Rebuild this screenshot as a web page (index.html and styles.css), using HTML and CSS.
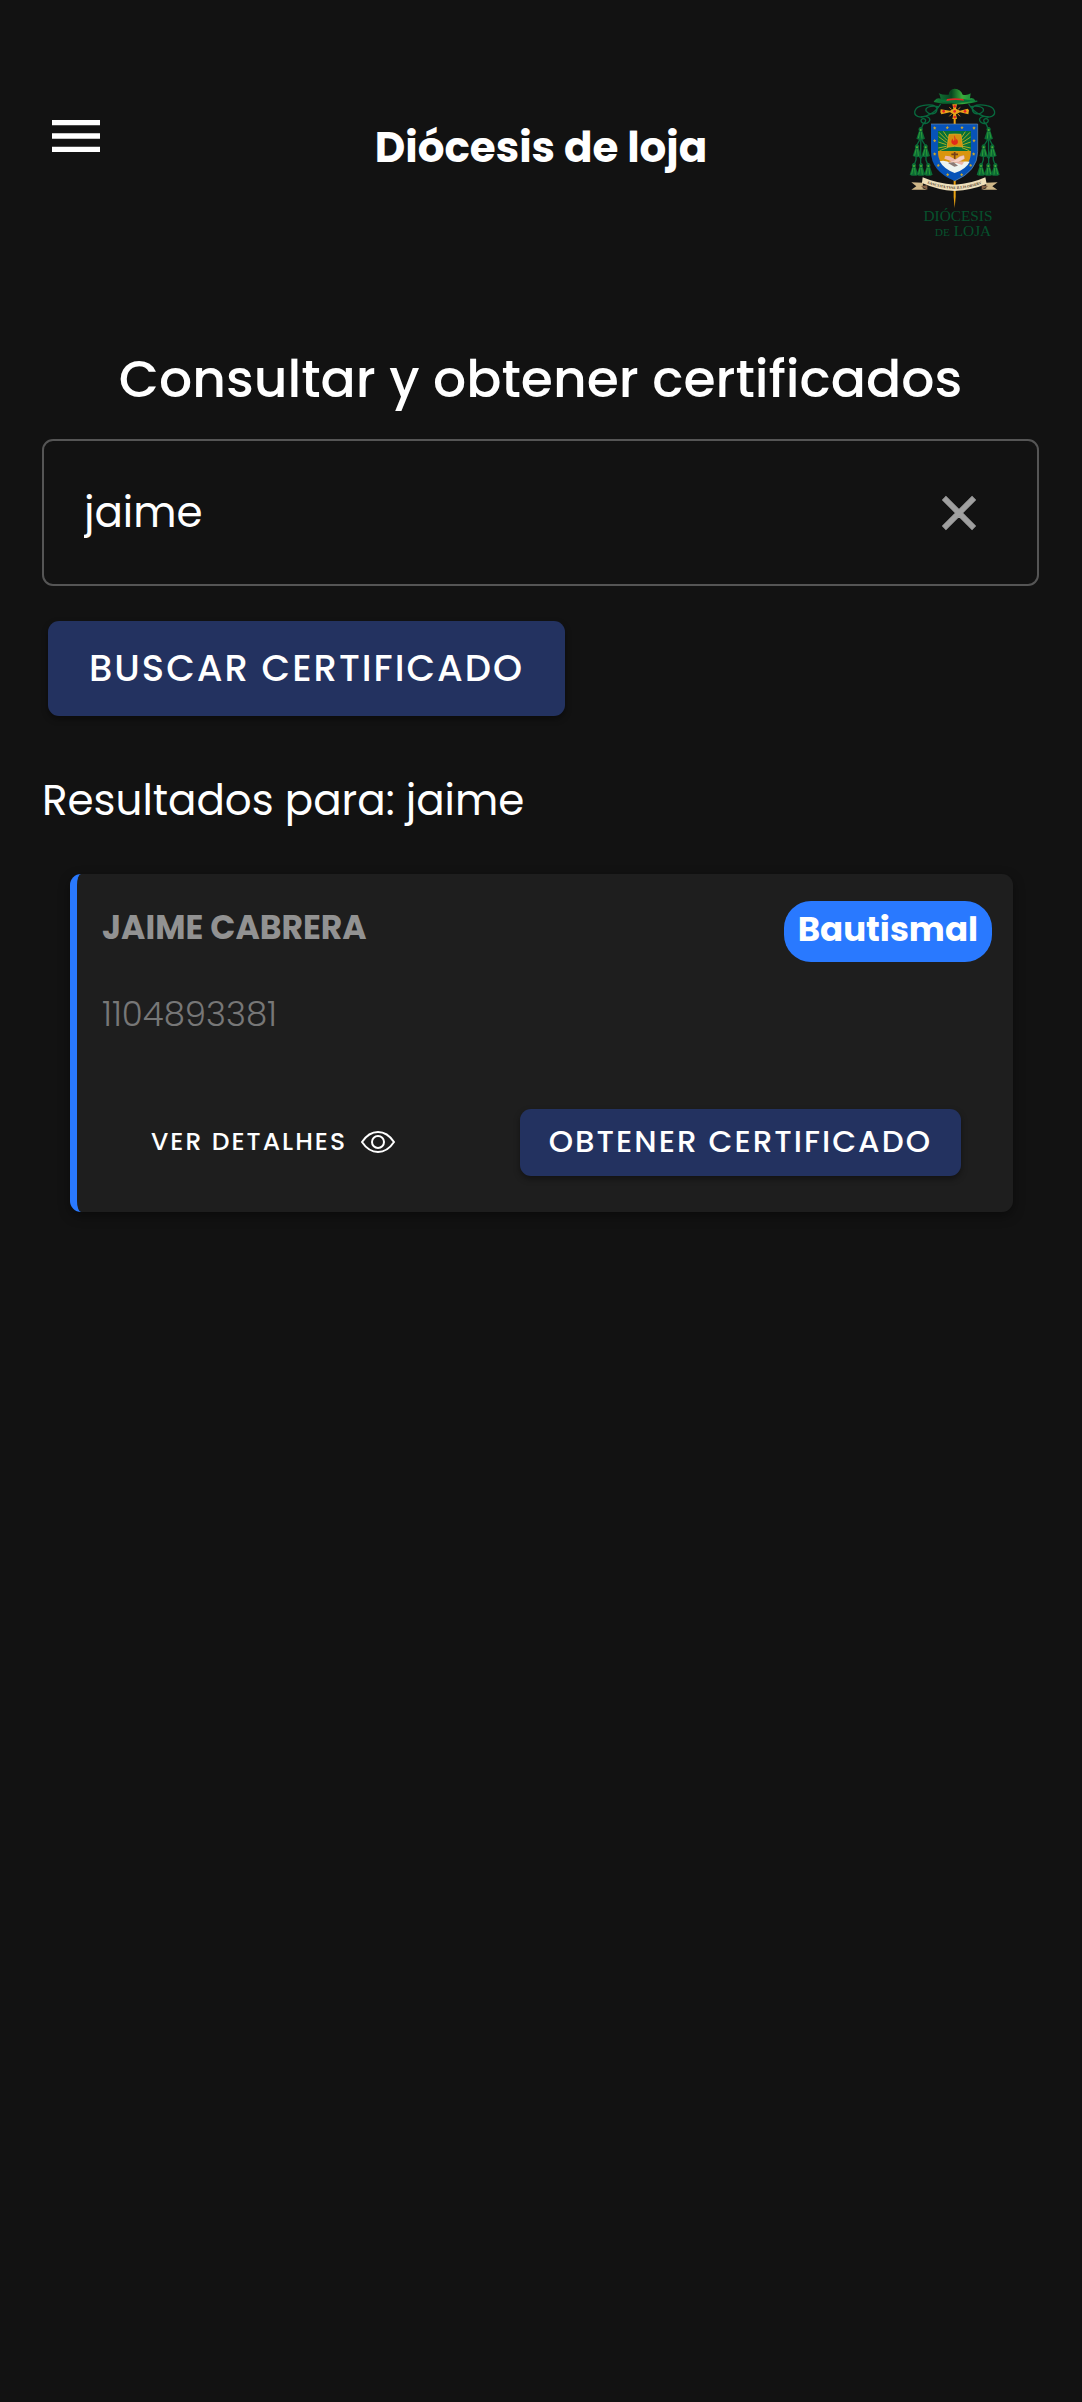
FILE: index.html
```html
<!DOCTYPE html>
<html lang="es">
<head>
<meta charset="utf-8">
<meta name="viewport" content="width=device-width, initial-scale=1">
<title>Diócesis de loja</title>
<link rel="stylesheet" href="styles.css">
</head>
<body>
<header class="topbar">
  <button class="icon-button menu" type="button" aria-label="Menú">
    <svg viewBox="0 0 24 24" width="64" height="64" fill="currentColor"><path d="M3,6H21V8H3V6M3,11H21V13H3V11M3,16H21V18H3V16Z"/></svg>
  </button>
  <div class="brand">Diócesis de loja</div>
  <svg class="crest" viewBox="0 0 330 495" role="img" aria-label="Escudo de la Diócesis de Loja">
    <defs>
      <linearGradient id="hat" x1="0" x2="1"><stop offset="0" stop-color="#17823b"/><stop offset=".4" stop-color="#06451f"/><stop offset=".65" stop-color="#39ad3b"/><stop offset="1" stop-color="#08743a"/></linearGradient>
      <g id="tassel"><path d="M0-18C-6-18-8-10-5-7L-13 17Q0 24 13 17L5-7C8-10 6-18 0-18Z" fill="#0b6a35"/><path d="M-3-3L-7 16M2-3L4 17" stroke="#31a538" stroke-width="2.5"/><circle cy="-9" r="3" fill="#55ad35"/></g>
      <g id="cords" fill="none" stroke="#08693e" stroke-width="4">
        <path d="M122 72C105 100 72 117 53 109C36 101 45 81 67 77C91 71 111 76 111 88C109 104 89 106 79 94C72 83 91 75 116 80"/>
        <path d="M62 111C83 105 96 116 86 126C76 136 59 127 64 119C71 111 84 120 72 130C62 139 62 150 62 258"/>
        <path d="M62 174L48 200V240L42 256M62 174L78 200V240L84 256M48 214L62 235L78 214"/>
      </g>
      <g id="tassels"><use href="#tassel" x="62" y="159"/><use href="#tassel" x="51" y="211"/><use href="#tassel" x="77" y="211"/><use href="#tassel" x="42" y="267"/><use href="#tassel" x="63" y="267"/><use href="#tassel" x="85" y="267"/></g>
      <path id="star" d="M0-5L2-2L5-1L2 2L2 5L0 3L-3 5L-2 2L-5-1L-2-2Z" fill="#c9a52e"/>
    </defs>
    <path d="M161 112H167V350L164 384L161 350Z" fill="#eba311"/>
    <use href="#cords"/><use href="#cords" transform="matrix(-1 0 0 1 328 0)"/>
    <use href="#tassels"/><use href="#tassels" transform="matrix(-1 0 0 1 328 0)"/>
    <path d="M103 62Q112 52 122 56L119 45L116 40Q131 46 146 44Q148 27 164 26Q182 27 188 44Q202 47 212 40L210 55Q222 52 226 62Q235 61 232 65Q190 75 164 73Q130 74 101 66Z" fill="url(#hat)"/>
    <path d="M111 62Q164 51 222 62Q192 69 164 69Q136 69 111 62Z" fill="#087238"/>
    <path d="M141 57Q165 52 190 57L192 62Q164 58 139 63Z" fill="#d72a27"/>
    <path d="M157 73H171L168 86L180 92L203 86L207 91L205 103L180 97L168 103L171 117H157L160 103L150 97L124 103L121 97L122 88L150 92L160 86Z" fill="#e9a41b"/>
    <path d="M148 82L155 88M181 82L174 88M148 109L156 101M180 109L173 101" stroke="#c88321" stroke-width="3"/>
    <g fill="#e62226"><circle cx="164" cy="79" r="4"/><circle cx="164" cy="94" r="4"/><circle cx="164" cy="111" r="4"/><circle cx="131" cy="94" r="4"/><circle cx="195" cy="94" r="4"/></g>
    <path d="M93 132H233V215Q233 273 164 303Q93 273 93 215Z" fill="#0753b8"/>
    <path d="M93 132H233V215Q233 273 164 303" fill="none" stroke="#6c8da9" stroke-width="2"/>
    <path d="M114 153H213V213H114Z" fill="#067037"/>
    <path d="M141 181L117 157M143 173L130 154M140 188L116 170M139 194L115 186M139 199L115 204M143 203L119 212M187 180L210 157M185 172L196 155M188 187L212 171M189 194L212 186M189 199L212 204M186 203L208 212" stroke="#a9ab22" stroke-width="3"/>
    <path d="M147 163L164 162L183 163L188 201L164 199L141 202Z" fill="#d68f0f" stroke="#ebb427" stroke-width="2"/>
    <path d="M164 166C160 174 167 177 161 183C158 181 158 177 158 175C153 182 151 192 164 195C178 192 174 181 170 176L167 182C168 176 165 173 164 166Z" fill="#e22a19"/>
    <path d="M114 213H213C213 230 209 242 203 249H124C116 238 114 228 114 213Z" fill="#d9950f"/>
    <path d="M119 244Q136 239 155 251Q179 243 209 245Q198 268 164 279Q132 268 119 244Z" fill="#edf4f1"/>
    <path d="M164 216V237M154 223H174" stroke="#764018" stroke-width="5"/>
    <path d="M136 227L149 229L174 243L192 247L186 255L169 249L144 240L133 236Z" fill="#edb7aa"/>
    <path d="M192 226L180 229L164 240L146 246L153 250L176 246L194 236Z" fill="#f4d0c4" stroke="#c18c83"/>
    <path d="M144 249L161 247L174 257L163 260Z" fill="#8a7c78"/>
    <g><use href="#star" x="104" y="144"/><use href="#star" x="142" y="143"/><use href="#star" x="186" y="143"/><use href="#star" x="222" y="144"/><use href="#star" x="104" y="182"/><use href="#star" x="222" y="182"/><use href="#star" x="104" y="222"/><use href="#star" x="221" y="222"/><use href="#star" x="115" y="256"/><use href="#star" x="212" y="256"/><use href="#star" x="143" y="284"/><use href="#star" x="185" y="284"/></g>
    <path d="M34 307L69 308L68 325L82 329L34 329L49 319ZM293 307L258 308L259 325L245 329L292 329L277 319Z" fill="#cfb788"/>
    <path d="M68 292Q112 311 164 314Q215 311 256 292L260 312Q215 330 164 333Q113 330 66 309Z" fill="#efe0bb"/>
    <path d="M62 318L82 316V329ZM265 318L245 316V329Z" fill="#866348"/>
    <path id="motto" d="M70 306Q114 325 164 327Q214 325 257 306" fill="none"/>
    <text class="crest-motto"><textPath href="#motto" startOffset="50%">SANCTITA TVAE ILLIS OBSERV</textPath></text>
    <text class="crest-name" x="174" y="423">DIÓCESIS</text>
    <text class="crest-name" x="189" y="468"><tspan class="crest-small">DE</tspan> LOJA</text>
  </svg>
</header>

<main class="page">
  <h1 class="heading">Consultar y obtener certificados</h1>
  <form class="search">
    <div class="field">
      <input class="field-input" type="text" value="jaime" aria-label="Nombre">
      <button class="icon-button clear" type="button" aria-label="Borrar">
        <svg viewBox="0 0 24 24" width="56" height="56" fill="currentColor" stroke="currentColor" stroke-width=".5"><path d="M19,6.41L17.59,5L12,10.59L6.41,5L5,6.41L10.59,12L5,17.59L6.41,19L12,13.41L17.59,19L19,17.59L13.41,12L19,6.41Z"/></svg>
      </button>
    </div>
    <button class="button button-large" type="button">BUSCAR CERTIFICADO</button>
  </form>
  <p class="results">Resultados para: jaime</p>

  <article class="card">
    <div class="card-head">
      <div class="person">
        <h2 class="name">JAIME CABRERA</h2>
        <p class="number">1104893381</p>
      </div>
      <span class="chip">Bautismal</span>
    </div>
    <div class="actions">
      <button class="details" type="button">VER DETALHES
        <svg viewBox="0 0 34 24" width="34" height="24" fill="none" stroke="currentColor" stroke-width="2"><path d="M1 12C5 6 10 2 17 2S29 6 33 12C29 18 24 22 17 22S5 18 1 12Z"/><circle cx="17" cy="12" r="6"/></svg>
      </button>
      <button class="button" type="button">OBTENER CERTIFICADO</button>
    </div>
  </article>
</main>
</body>
</html>
```
FILE: styles.css
```css
* { box-sizing: border-box; }

body {
  margin: 0;
  min-height: 100vh;
  background: #121212;
  color: #fff;
  font-family: Poppins, Inter, "Noto Sans", sans-serif;
}

h1, h2, p { margin: 0; }

button, input {
  font: inherit;
  color: inherit;
  border: 0;
  background: none;
  padding: 0;
}

button { cursor: pointer; }
svg { display: block; flex: none; }

.topbar {
  display: grid;
  grid-template-columns: 1fr auto 1fr;
  align-items: start;
  padding: 80px 72px 0 44px;
}

.menu { justify-self: start; margin-top: 24px; }

.brand {
  margin-top: 44px;
  padding-left: 28px;
  font-size: 42px;
  font-weight: 700;
  line-height: 48px;
}

.crest { width: 110px; height: 165px; justify-self: end; }

.crest-name {
  font-family: "Liberation Serif", serif;
  font-size: 46px;
  text-anchor: middle;
  fill: #06512d;
}

.crest-small { font-size: 34px; }

.crest-motto {
  font-family: "Liberation Serif", serif;
  font-size: 11px;
  font-weight: 700;
  text-anchor: middle;
  fill: #4b3523;
}

.page { padding: 102px 43px 40px 42px; }

.heading {
  font-size: 52px;
  font-weight: 500;
  line-height: 64px;
  text-align: center;
}

.search { margin-top: 28px; }

.field {
  display: flex;
  align-items: center;
  height: 147px;
  padding: 0 50px 0 40px;
  border: 2px solid #555;
  border-radius: 11px;
}

.field-input {
  flex: 1;
  min-width: 0;
  font-size: 42px;
  line-height: 64px;
  outline: 0;
}

.clear { color: #a0a0a0; }

.button {
  height: 67px;
  padding: 0 29px 2px;
  border-radius: 11px;
  background: #233260;
  font-size: 31px;
  font-weight: 500;
  letter-spacing: 2px;
  white-space: nowrap;
  box-shadow: 0 3px 6px rgba(0, 0, 0, .4);
}

.button-large {
  height: 95px;
  margin: 35px 0 0 6px;
  padding: 0 41px 2px;
  font-size: 37px;
}

.results {
  margin-top: 61px;
  font-size: 42px;
  line-height: 48px;
}

.card {
  margin: 49px 26px 0 28px;
  padding: 27px 21px 36px 25px;
  border-left: 7px solid #2979ff;
  border-radius: 11px;
  background: #1e1e1e;
  box-shadow: 0 4px 12px rgba(0, 0, 0, .4);
}

.card-head {
  display: flex;
  justify-content: space-between;
  align-items: flex-start;
}

.person { padding-top: 11px; }

.name {
  color: #929292;
  font-size: 33px;
  font-weight: 700;
  line-height: 32px;
}

.number {
  margin-top: 54px;
  color: #777;
  font-size: 34px;
  font-weight: 300;
  line-height: 32px;
}

.chip {
  padding: 12px 14px 17px;
  border-radius: 27px;
  background: #2979ff;
  font-size: 34px;
  font-weight: 700;
  line-height: 32px;
}

.actions {
  display: flex;
  justify-content: space-between;
  align-items: center;
  margin-top: 79px;
  padding: 0 31px 0 49px;
}

.details {
  display: flex;
  align-items: center;
  gap: 14px;
  padding-bottom: 2px;
  font-size: 25px;
  font-weight: 500;
  letter-spacing: 2px;
}
```
